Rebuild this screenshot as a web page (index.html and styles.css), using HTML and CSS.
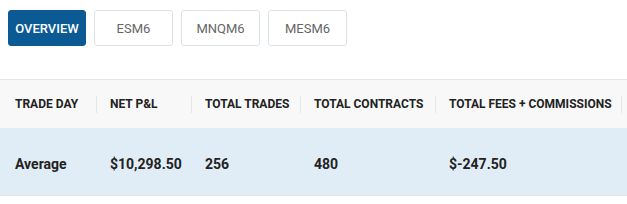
FILE: index.html
```html
<!doctype html>
<html lang="en">
<head>
    <meta charset="UTF-8">
    <title>Summary</title>
    <link rel="stylesheet" href="styles.css">
</head>
<body>
    <div class="tabs">
        <div class="tab tab--active">OVERVIEW</div>
        <div class="tab">ESM6</div>
        <div class="tab">MNQM6</div>
        <div class="tab">MESM6</div>
    </div>

    <table class="summary">
        <thead>
            <tr>
                <th class="col-day">Trade Day</th>
                <th class="col-pnl">Net P&amp;L</th>
                <th class="col-trades">Total Trades</th>
                <th class="col-contracts">Total Contracts</th>
                <th class="col-fees">Total Fees + Commissions</th>
                <th class="col-rest"></th>
            </tr>
        </thead>
        <tbody>
            <tr>
                <td>Average</td>
                <td>$10,298.50</td>
                <td>256</td>
                <td>480</td>
                <td>$-247.50</td>
                <td></td>
            </tr>
        </tbody>
    </table>
</body>
</html>
```

FILE: styles.css
```css
*,*:before,*:after{
    box-sizing: border-box;
}
body{
    margin: 0;
    padding: 0;
    background: #fff;
    font-family: 'Roboto', 'Liberation Sans', sans-serif;
    overflow: hidden;
}
.tabs{
    display: flex;
    gap: 8px;
    padding: 10px 8px 0;
}
.tab{
    display: flex;
    justify-content: center;
    align-items: center;
    width: 79px;
    height: 36px;
    border: 1px solid #dde3ea;
    border-radius: 3px;
    font-size: 13px;
    font-weight: 400;
    color: #666;
}
.tab--active{
    width: 78px;
    background: #0b5a93;
    border-color: #0b5a93;
    color: #fff;
    font-weight: 500;
}
.summary{
    width: 100%;
    margin-top: 33px;
    border-collapse: collapse;
    table-layout: fixed;
    border-top: 1px solid #e1e6ec;
    border-bottom: 1px solid #e1e6ec;
}
.summary th{
    position: relative;
    height: 48px;
    padding: 0 0 0 13px;
    background: #f8f8f8;
    text-align: left;
    font-size: 12px;
    font-weight: 700;
    text-transform: uppercase;
    color: #222;
    white-space: nowrap;
}
.summary th:after{
    content: '';
    position: absolute;
    right: 0;
    top: 16px;
    height: 17px;
    width: 1px;
    background: #e3e6ea;
}
.summary th.col-rest:after{
    display: none;
}
.summary td{
    height: 68px;
    padding: 6px 0 0 13px;
    background: #e1edf6;
    font-size: 14px;
    font-weight: 700;
    color: #222;
    white-space: nowrap;
}
.summary th:first-child,
.summary td:first-child{
    padding-left: 15px;
}
.col-day{ width: 97px; }
.col-pnl{ width: 95px; }
.col-trades{ width: 109px; }
.col-contracts{ width: 135px; }
.col-fees{ width: 186px; }
```
